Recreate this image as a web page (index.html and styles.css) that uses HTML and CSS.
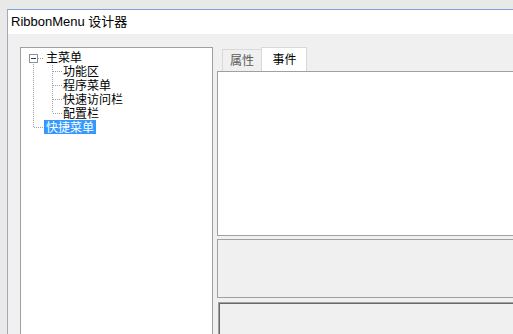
FILE: index.html
```html
<html lang="zh-CN">
<head>
    <meta charset="UTF-8">
    <meta name="viewport" content="width=device-width, initial-scale=1.0">
    <title>RibbonMenu 设计器</title>
    <link rel="stylesheet" href="styles.css">
</head>
<body>
    <div class="window">
        <div class="titlebar">RibbonMenu 设计器</div>
        <div class="content">
            <!-- Menu tree -->
            <div class="tree">
                <svg class="tree-lines" width="60" height="90" viewBox="0 0 60 90">
                    <g stroke="#a0a0a0" stroke-width="1" stroke-dasharray="1 1" fill="none">
                        <line x1="13.5" y1="17" x2="13.5" y2="80"/>
                        <line x1="14" y1="80.5" x2="24" y2="80.5"/>
                        <line x1="18" y1="11.5" x2="24" y2="11.5"/>
                        <line x1="32.5" y1="18" x2="32.5" y2="66"/>
                        <line x1="33" y1="24.5" x2="42" y2="24.5"/>
                        <line x1="33" y1="38.5" x2="42" y2="38.5"/>
                        <line x1="33" y1="52.5" x2="42" y2="52.5"/>
                        <line x1="33" y1="66.5" x2="42" y2="66.5"/>
                    </g>
                    <rect x="9.5" y="7.5" width="8" height="8" fill="#fff" stroke="#919191"/>
                    <line x1="11" y1="11.5" x2="16" y2="11.5" stroke="#1e3a8a"/>
                </svg>
                <div class="node root">主菜单</div>
                <div class="node child">功能区</div>
                <div class="node child">程序菜单</div>
                <div class="node child">快速访问栏</div>
                <div class="node child">配置栏</div>
                <div class="node root"><span class="selected">快捷菜单</span></div>
            </div>

            <!-- Property grid -->
            <div class="side">
                <div class="tabs">
                    <div class="tab">属性</div>
                    <div class="tab active">事件</div>
                </div>
                <div class="panel grid"></div>
                <div class="panel help"></div>
                <div class="panel editor"></div>
            </div>
        </div>
    </div>
</body>
</html>
```

FILE: styles.css
```css
body {
    margin: 0;
    padding: 0;
    background-color: #e9e9e9;
    font-family: "Liberation Sans", "Noto Sans CJK SC", sans-serif;
    color: #000;
    overflow: hidden;
    height: 334px;
}
.window {
    margin: 9px 0 0 7px;
    border-top: 1px solid #7ea2d6;
    border-left: 1px solid #a3abb8;
    background: #f0f0f0;
    height: 324px;
    overflow: hidden;
}
.titlebar {
    height: 24px;
    line-height: 24px;
    padding-left: 3px;
    background: #fff;
    font-size: 13px;
}
.content {
    display: flex;
    gap: 4px;
    padding: 13px 0 0 12px;
}
.tree {
    position: relative;
    width: 191px;
    height: 320px;
    padding-top: 2px;
    background: #fff;
    border: 1px solid #a0a0a0;
    font-family: "Noto Sans CJK SC", sans-serif;
    font-size: 12px;
    flex-shrink: 0;
}
.tree-lines {
    position: absolute;
    left: -1px;
    top: -1px;
}
.node {
    height: 14px;
    line-height: 14px;
    white-space: nowrap;
}
.node.root {
    padding-left: 25px;
}
.node.child {
    padding-left: 42px;
}
.node .selected {
    display: inline-block;
    margin-left: -2px;
    padding: 0 2px;
    background: #3399ff;
    color: #fff;
}
.side {
    width: 320px;
    flex-shrink: 0;
}
.tabs {
    display: flex;
    align-items: flex-end;
    height: 24px;
    padding-left: 5px;
}
.tab {
    width: 38px;
    height: 21px;
    line-height: 20px;
    text-align: center;
    font-family: "Noto Sans CJK SC", sans-serif;
    font-size: 12px;
    color: #5a5a5a;
    border: 1px solid #d9d9d9;
    border-bottom: none;
    border-right: none;
}
.tab.active {
    width: 43px;
    height: 23px;
    line-height: 22px;
    background: #fff;
    color: #000;
    border-right: 1px solid #d9d9d9;
    padding-left: 1px;
}
.panel {
    border: 1px solid #a0a0a0;
}
.grid {
    height: 163px;
    background: #fff;
    box-shadow: inset 0 1px 0 #fff;
}
.help {
    margin-top: 3px;
    height: 57px;
    background: #f0f0f0;
}
.editor {
    margin-top: 4px;
    height: 60px;
    margin-left: 1px;
    background: #f0f0f0;
    border-color: #a0a0a0;
    box-shadow: inset 1px 1px 0 #696969;
}
```
